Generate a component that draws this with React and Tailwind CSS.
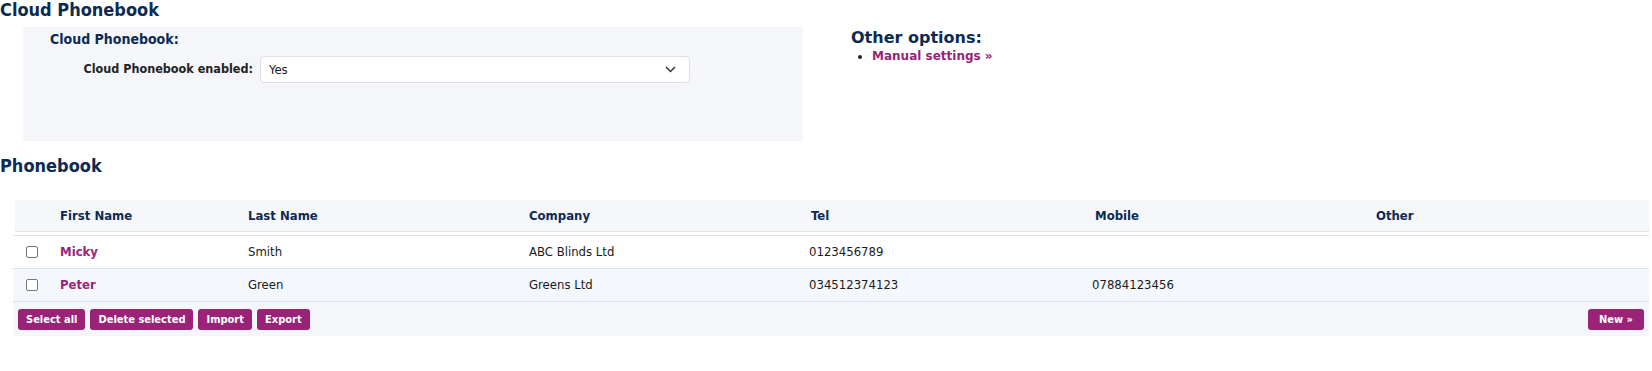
import React from "react";

const FONT = "font-['DejaVu_Sans_Condensed','DejaVu_Sans',sans-serif]";

function Btn({ children, wide }) {
  return (
    <button className={`h-[21px] ${wide ? "px-[11px]" : "px-[8px]"} rounded-[3px] bg-[#992477] text-white text-[11px] font-bold leading-[21px]`}>
      {children}
    </button>
  );
}

function Row({ first, last, company, tel, mobile, other, bg }) {
  return (
    <div className={`grid grid-cols-[47px_188px_281px_282px_284px_281px_1fr] h-[33px] items-center border-b border-[#dde2e8] ${bg}`}>
      <div className="pl-[13px] flex items-center">
        <span className="block w-[12px] h-[12px] border border-[#767676] rounded-[2px] bg-white" />
      </div>
      <div className="text-[#992477] font-bold">{first}</div>
      <div>{last}</div>
      <div>{company}</div>
      <div className="-ml-[2px]">{tel}</div>
      <div className="-ml-[3px]">{mobile}</div>
      <div>{other}</div>
    </div>
  );
}

export default function App() {
  return (
    <div className={`${FONT} text-[13px] text-[#1a1a1a] w-[1652px] bg-white`}>
      <h1 className="text-[18px] font-bold text-[#0d2b52] leading-[20px]">Cloud Phonebook</h1>
      <div className="flex mt-[7px]">
        <div className="ml-[23px] w-[780px] h-[114px] bg-[#f5f6fa] pl-[27px] pt-[3px]">
          <h2 className="text-[14px] font-bold text-[#0d2b52] leading-[18px]">Cloud Phonebook:</h2>
          <div className="flex items-center mt-[8px]">
            <label className="w-[203px] text-right text-[12.5px] font-bold text-[#222]">Cloud Phonebook enabled:</label>
            <div className="ml-[7px] w-[430px] h-[27px] bg-white border border-[#dcdfe4] rounded-[4px] flex items-center justify-between pl-[8px] pr-[13px]">
              <span>Yes</span>
              <svg width="11" height="7" viewBox="0 0 11 7" fill="none" stroke="#333" strokeWidth="1.5">
                <path d="M1 1l4.5 4.5L10 1" />
              </svg>
            </div>
          </div>
        </div>
        <div className="ml-[48px] pt-[1px]">
          <h2 className="font-['DejaVu_Sans',sans-serif] text-[16px] font-bold text-[#0d2b52] leading-[20px]">Other options:</h2>
          <ul className="list-disc pl-[21px] mt-[1px] font-['DejaVu_Sans',sans-serif] text-[12px] leading-[15px]">
            <li className="text-[#222]">
              <a className="text-[#992477] font-bold">Manual settings »</a>
            </li>
          </ul>
        </div>
      </div>
      <h1 className="text-[18px] font-bold text-[#0d2b52] leading-[20px] mt-[15px]">Phonebook</h1>
      <div className="ml-[13px] w-[1636px] mt-[24px]">
        <div className="ml-[2px] h-[32px] bg-[#f5f7fa] border-b border-[#dde2e8] grid grid-cols-[45px_188px_281px_282px_284px_281px_1fr] items-center font-bold text-[#0d2b52]">
          <div />
          <div>First Name</div>
          <div>Last Name</div>
          <div>Company</div>
          <div>Tel</div>
          <div>Mobile</div>
          <div>Other</div>
        </div>
        <div className="h-[3px]" />
        <div className="border-t border-[#dde2e8]">
          <Row first="Micky" last="Smith" company="ABC Blinds Ltd" tel="0123456789" mobile="" other="" bg="bg-white" />
          <Row first="Peter" last="Green" company="Greens Ltd" tel="034512374123" mobile="07884123456" other="" bg="bg-[#f4f8fc]" />
        </div>
        <div className="h-[34px] bg-[#f5f6fa] flex items-center justify-between px-[5px]">
          <div className="flex gap-[5px]">
            <Btn>Select all</Btn>
            <Btn>Delete selected</Btn>
            <Btn>Import</Btn>
            <Btn>Export</Btn>
          </div>
          <Btn wide>New »</Btn>
        </div>
      </div>
    </div>
  );
}
